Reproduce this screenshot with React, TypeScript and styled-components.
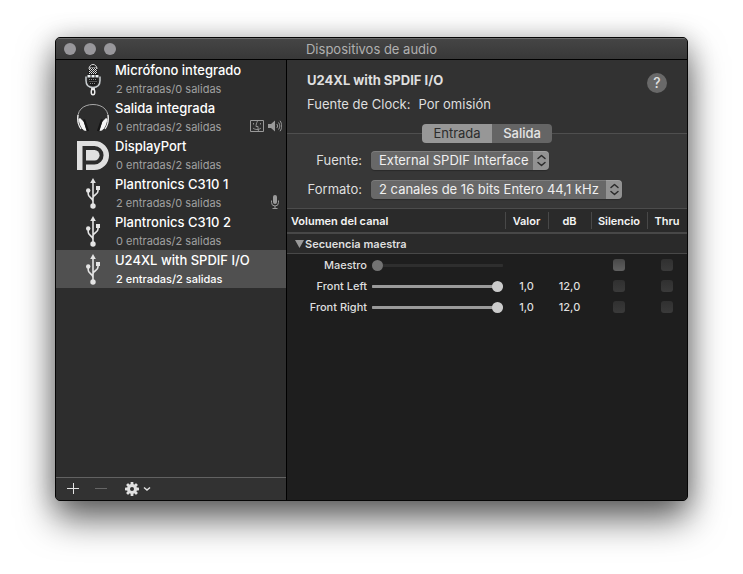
import React from "react";
import styled, { createGlobalStyle, css } from "styled-components";

const GlobalStyle = createGlobalStyle`
  * { box-sizing: border-box; }
  body {
    margin: 0;
    background: #fff;
    font-family: Inter, "Liberation Sans", sans-serif;
    font-size: 13px;
    color: #dfdfdf;
  }
  button, select, input { font: inherit; color: inherit; margin: 0; padding: 0; border: 0; }
`;

const Desktop = styled.div`
  min-height: 100vh;
  padding: 37px 55px 73px;
  display: flex;
  overflow: hidden;
`;

const Window = styled.main`
  flex: 1;
  display: flex;
  flex-direction: column;
  min-width: 0;
  border: 1px solid #050505;
  border-radius: 5px;
  overflow: hidden;
  background: #323232;
  box-shadow: 0 18px 36px rgba(0, 0, 0, 0.6), 0 2px 26px rgba(0, 0, 0, 0.22);
`;

const TitleBar = styled.header`
  height: 22px;
  display: grid;
  grid-template-columns: 1fr auto 1fr;
  align-items: center;
  padding: 0 8px;
  background: linear-gradient(#454545, #383838);
  border-top: 1px solid #6c6c6c;
  border-bottom: 1px solid #000;
`;

const Lights = styled.div`
  display: flex;
  gap: 8px;
`;

const Light = styled.button`
  width: 12px;
  height: 12px;
  border-radius: 50%;
  background: #98979b;
`;

const WindowTitle = styled.h1`
  margin: 0;
  font-size: 13px;
  line-height: 20px;
  font-weight: 400;
  color: #b0b0b0;
`;

const Body = styled.div`
  flex: 1;
  display: grid;
  grid-template-columns: 231px minmax(0, 1fr);
`;

const Sidebar = styled.aside`
  display: flex;
  flex-direction: column;
  background: #2d2d2d;
  border-right: 1px solid #000;
`;

const DeviceList = styled.ul`
  flex: 1;
  list-style: none;
  margin: 0;
  padding: 0;
`;

const DeviceRow = styled.button<{ $selected?: boolean }>`
  width: 100%;
  height: 38px;
  display: grid;
  grid-template-columns: 32px minmax(0, 1fr) auto;
  column-gap: 6px;
  padding: 0 4px 0 21px;
  text-align: left;
  color: ${(p) => (p.$selected ? "#fff" : "#a0a0a0")};
  background: ${(p) => (p.$selected ? "#505050" : "transparent")};
`;

const DeviceIcon = styled.span`
  align-self: center;
  display: flex;
  justify-content: center;
`;

const DeviceText = styled.span`
  display: flex;
  flex-direction: column;
  padding-top: 1px;
  white-space: nowrap;
`;

const DeviceName = styled.span`
  font-size: 13px;
  line-height: 18px;
  font-weight: 500;
  color: #fff;
`;

const DeviceInfo = styled.span<{ $selected?: boolean }>`
  font-size: 11px;
  line-height: 20px;
  padding-left: 1px;
  font-weight: ${(p) => (p.$selected ? 500 : 400)};
`;

const Badges = styled.span<{ $inset?: boolean }>`
  align-self: end;
  display: flex;
  align-items: center;
  gap: 4px;
  height: 22px;
  padding-right: ${(p) => (p.$inset ? 3 : 0)}px;
  color: #9a9a9a;
`;

const Footer = styled.footer`
  height: 23px;
  display: flex;
  align-items: center;
  padding-left: 9px;
  border-top: 1px solid #626262;
  background: #323232;
`;

const FootButton = styled.button<{ $wide?: boolean }>`
  height: 20px;
  width: ${(p) => (p.$wide ? 32 : 28)}px;
  display: flex;
  align-items: center;
  justify-content: ${(p) => (p.$wide ? "flex-end" : "flex-start")};
  gap: 4px;
  padding: 0 2px;
  background: none;
`;

const Detail = styled.section`
  display: flex;
  flex-direction: column;
  background: #1e1e1e;
`;

const Head = styled.div`
  height: 64px;
  display: flex;
  justify-content: space-between;
  padding: 9px 20px 0;
  background: #323232;
`;

const HeadText = styled.div`
  line-height: 22px;
`;

const DeviceTitle = styled.h2`
  margin: 0 0 2px;
  font-size: 13px;
  line-height: 22px;
  font-weight: 700;
`;

const Clock = styled.dl`
  display: flex;
  gap: 8px;
  margin: 0;
  dd { margin: 0; }
`;

const Help = styled.button`
  width: 20px;
  height: 20px;
  margin-top: 4px;
  border-radius: 50%;
  background: #696969;
  font-size: 14px;
  line-height: 20px;
  font-weight: 500;
`;

const TabRow = styled.div`
  display: flex;
  align-items: center;
  background: linear-gradient(#323232 50%, #373737 50%);
`;

const Rule = styled.span`
  flex: 1;
  height: 1px;
  background: #4f4f4f;
`;

const Tabs = styled.div`
  display: flex;
  border-radius: 4px;
  overflow: hidden;
`;

const Tab = styled.button<{ $active?: boolean }>`
  height: 19px;
  line-height: 19px;
  width: ${(p) => (p.$active ? 70 : 60)}px;
  ${(p) =>
    p.$active
      ? css`background: #979797; color: #2c2c2c;`
      : css`background: #656565; color: #e6e6e6; font-weight: 500;`}
`;

const Form = styled.div`
  display: grid;
  grid-template-columns: 55px auto;
  justify-content: start;
  column-gap: 9px;
  row-gap: 10px;
  padding: 8px 20px 9px;
  background: #373737;
  border-bottom: 1px solid #4c4c4c;
`;

const FormLabel = styled.label`
  text-align: right;
  line-height: 19px;
  white-space: nowrap;
`;

const SelectBox = styled.span<{ $wide?: boolean }>`
  display: flex;
  justify-self: start;
  width: ${(p) => (p.$wide ? 251 : 178)}px;
  height: 19px;
  border-radius: 4px;
  overflow: hidden;
  background: linear-gradient(90deg, #686868 0 calc(100% - 16px), #929292 calc(100% - 16px));
  box-shadow: inset 0 1px 0 rgba(255, 255, 255, 0.14), 0 1px 1px rgba(0, 0, 0, 0.25);
`;

const Select = styled.select`
  appearance: none;
  flex: 1;
  min-width: 0;
  padding-left: 8px;
  height: 19px;
  line-height: 19px;
  background: none;
  color: #f0f0f0;
`;

const Stepper = styled.svg`
  width: 16px;
  height: 19px;
  flex: none;
  pointer-events: none;
`;

const Table = styled.table`
  width: 100%;
  border-collapse: separate;
  border-spacing: 0;
  table-layout: fixed;
  font-size: 11px;
`;

const Col = styled.col<{ $w?: number }>`
  width: ${(p) => (p.$w ? `${p.$w}px` : "auto")};
`;

const HeadRow = styled.tr`
  height: 25px;
  background: #2a2a2a;
`;

const HeadCell = styled.th<{ $first?: boolean }>`
  padding: 0;
  font-weight: 600;
  color: #f4f4f4;
  border-bottom: 2px solid #484848;
  text-align: ${(p) => (p.$first ? "left" : "center")};
  padding-left: ${(p) => (p.$first ? 4 : 0)}px;
  background: ${(p) =>
    p.$first ? "none" : "linear-gradient(#484848, #484848) left center / 1px 17px no-repeat"};
`;

const GroupRow = styled.tr`
  height: 20px;
  background: #2a2a2a;
`;

const GroupCell = styled.th`
  padding: 0 0 0 8px;
  text-align: left;
  border-bottom: 1px solid #484848;
`;

const Disclosure = styled.button`
  display: flex;
  align-items: center;
  gap: 1px;
  background: none;
  font-weight: 600;
`;

const Row = styled.tr`
  height: 21px;
`;

const Cell = styled.td`
  padding: 1px 0 0;
  text-align: center;
  font-weight: 500;
`;

const Channel = styled.label`
  display: grid;
  grid-template-columns: 80px minmax(0, 1fr);
  align-items: center;
  column-gap: 5px;
  padding-right: 2px;
  text-align: right;
  font-weight: 500;
`;

const Slider = styled.input<{ $off?: boolean }>`
  appearance: none;
  width: 100%;
  height: 11px;
  background: linear-gradient(${(p) => (p.$off ? "#2e2e2e, #2e2e2e" : "#9a9a9a, #9a9a9a")}) center / 100% 3px no-repeat;
  border-radius: 6px;
  &::-webkit-slider-thumb {
    appearance: none;
    width: 11px;
    height: 11px;
    border-radius: 50%;
    background: ${(p) => (p.$off ? "#737373" : "#cbcbcb")};
  }
`;

const Check = styled.input<{ $on?: boolean }>`
  appearance: none;
  display: block;
  width: 12px;
  height: 12px;
  margin: 0 auto;
  border-radius: 3px;
  background: ${(p) => (p.$on ? "linear-gradient(#484848, #606060)" : "linear-gradient(#303030, #3a3a3a)")};
`;

const MicrophoneArt = () => (
  <svg width="18" height="33" viewBox="0 0 18 33">
    <path d="M4.500 6.500a4.500 5 0 0 1 9 0v6h-9zM4.500 14h9v4.500a4.500 4.500 0 0 1-9 0z" fill="#1a1a1a" />
    <path d="M5 6a4 4.500 0 0 1 8 0" fill="none" stroke="#ddd" strokeWidth="1" />
    <path d="M5.500 4.500h7M5 6.500h8M5 8.500h8M5 10.500h8" stroke="#e4e4e4" strokeDasharray="1 1" />
    <path d="M6 5.500h7M6 7.500h7M6 9.500h7" stroke="#c4c4c4" strokeDasharray="1 1" />
    <path d="M5 16.500h8M5.500 18.500h7M6 20.500h6" stroke="#8c8c8c" strokeDasharray="1 1" />
    <path d="M2 13.500v4c0 4.800 3 7 7 7s7-2.200 7-7v-4" fill="none" stroke="#c9ced1" strokeWidth="1.500" />
    <path d="M3.500 12h11v2.500h-11z" fill="#e9eef0" />
    <path d="M6.500 11h1v5h-1zM10.500 11h1v5h-1z" fill="#2a2a2a" />
    <path d="M7 25h4v2H7z" fill="#ddd" />
    <ellipse cx="9" cy="29" rx="1.800" ry="2.800" fill="none" stroke="#eee" strokeWidth="1.400" />
  </svg>
);

const HeadphonesArt = () => (
  <svg width="32" height="30" viewBox="0 0 32 30">
    <path d="M1.500 19C-1.500 8 6 1.500 16 1.500S33.500 8 30.500 19" fill="none" stroke="#a8a8a8" strokeWidth="1" />
    <path d="M1 12c-1 6 0 10 3 14M31 12c1 6 0 10-3 14" fill="none" stroke="#eee" strokeWidth="1.200" />
    <path d="M1.500 16c1 5 2 8.500 5.500 11.500l2.500.5-2.500-9-4-4z" fill="#f5f5f5" />
    <path d="M30.500 16c-1 5-2 8.500-5.500 11.500l-2.500.5 2.500-9 4-4z" fill="#f5f5f5" />
    <path d="M7 16.500l4 11.500M25 16.500l-4 11.500" stroke="#151515" strokeWidth="2.200" />
  </svg>
);

const DisplayPortArt = () => (
  <svg width="32" height="30" viewBox="0 0 32 30" fill="#e0e0e0">
    <path d="M0 0h17.500a14.500 14.500 0 0 1 0 29H9v-5.500h8.500a9 9.200 0 0 0 0-18.500H5.500v24H0z" />
    <path d="M9 9h8.500a5 5.200 0 0 1 0 10.500H9z" />
  </svg>
);

const UsbArt = () => (
  <svg width="14" height="31" viewBox="0 0 14 31" fill="#e4e4e4">
    <path d="M7 0l2.800 5H4.200z" />
    <path d="M7 4v24M7 23.500c0-4-4.800-3.500-4.800-7.500v-4M7 20c0-3.500 5-3 5-7V9" fill="none" stroke="#e4e4e4" strokeWidth="1.600" />
    <circle cx="2.200" cy="12.500" r="2.200" />
    <path d="M10 8h4v4h-4z" />
    <circle cx="7" cy="28" r="2.700" />
  </svg>
);

const FinderBadge = () => (
  <svg width="14" height="12" viewBox="0 0 14 12" fill="none" stroke="currentColor">
    <path d="M.5.500h13v11H.5z" />
    <path d="M7.500 1C6.500 3 6 5 6 6.500h2c0 2 0 3 .5 5M3.500 3v1.500M10.500 3v1.500M3 8c2 2 6 2 8 0" strokeWidth=".9" />
  </svg>
);

const SpeakerBadge = () => (
  <svg width="14" height="12" viewBox="0 0 14 12">
    <path d="M0 4h3l4-3.500v11L3 8H0z" fill="currentColor" />
    <path d="M8.800 4c1 1.200 1 2.800 0 4M10.500 2.500c1.800 2 1.800 5 0 7M12 .8c2.300 3 2.300 7.400 0 10.400" fill="none" stroke="currentColor" strokeWidth="1" />
  </svg>
);

const MicBadge = () => (
  <svg width="8" height="14" viewBox="0 0 8 14">
    <rect x="2" y="0" width="4" height="9" rx="2" fill="currentColor" />
    <path d="M.5 5.500v2a3.500 3.500 0 0 0 7 0v-2M4 11v2.500M1.500 13.500h5" fill="none" stroke="currentColor" />
  </svg>
);

const GearArt = () => (
  <svg width="14" height="14" viewBox="-7 -7 14 14" fill="#e0e0e0">
    {[0, 45, 90, 135].map((a) => (
      <rect key={a} x="-1.400" y="-7" width="2.800" height="14" rx=".6" transform={`rotate(${a})`} />
    ))}
    <circle r="5" />
    <circle r="2" fill="#323232" />
  </svg>
);

const Arrows = () => (
  <Stepper viewBox="0 0 16 19" fill="none" stroke="#2b2b2b" strokeWidth="1.500" strokeLinecap="round" strokeLinejoin="round">
    <path d="M5 7.500l3.500-3 3.500 3M5 11.500l3.500 3 3.500-3" />
  </Stepper>
);

const devices = [
  { name: "Micrófono integrado", info: "2 entradas/0 salidas", art: <MicrophoneArt /> },
  { name: "Salida integrada", info: "0 entradas/2 salidas", art: <HeadphonesArt />, badges: <><FinderBadge /><SpeakerBadge /></> },
  { name: "DisplayPort", info: "0 entradas/2 salidas", art: <DisplayPortArt /> },
  { name: "Plantronics C310 1", info: "2 entradas/0 salidas", art: <UsbArt />, badges: <MicBadge />, inset: true },
  { name: "Plantronics C310 2", info: "0 entradas/2 salidas", art: <UsbArt /> },
  { name: "U24XL with SPDIF I/O", info: "2 entradas/2 salidas", art: <UsbArt />, selected: true },
];

const channels = [
  { name: "Maestro", level: 0, value: "", db: "", off: true },
  { name: "Front Left", level: 100, value: "1,0", db: "12,0", off: false },
  { name: "Front Right", level: 100, value: "1,0", db: "12,0", off: false },
];

export default function App() {
  return (
    <Desktop>
      <GlobalStyle />
      <Window>
        <TitleBar>
          <Lights>
            <Light aria-label="Cerrar" />
            <Light aria-label="Minimizar" />
            <Light aria-label="Ampliar" />
          </Lights>
          <WindowTitle>Dispositivos de audio</WindowTitle>
        </TitleBar>
        <Body>
          <Sidebar>
            <DeviceList>
              {devices.map((d) => (
                <li key={d.name}>
                  <DeviceRow $selected={d.selected}>
                    <DeviceIcon>{d.art}</DeviceIcon>
                    <DeviceText>
                      <DeviceName>{d.name}</DeviceName>
                      <DeviceInfo $selected={d.selected}>{d.info}</DeviceInfo>
                    </DeviceText>
                    {d.badges && <Badges $inset={d.inset}>{d.badges}</Badges>}
                  </DeviceRow>
                </li>
              ))}
            </DeviceList>
            <Footer>
              <FootButton aria-label="Añadir">
                <svg width="12" height="12" viewBox="0 0 12 12"><path d="M0 5.500h12M6.500 0v11" stroke="#e4e4e4" /></svg>
              </FootButton>
              <FootButton aria-label="Eliminar" disabled>
                <svg width="12" height="12" viewBox="0 0 12 12"><path d="M0 5.500h12" stroke="#666" /></svg>
              </FootButton>
              <FootButton $wide aria-label="Acciones">
                <GearArt />
                <svg width="8" height="6" viewBox="0 0 8 6"><path d="M1 1.500l3 2.500 3-2.500" fill="none" stroke="#e0e0e0" strokeWidth="1.500" /></svg>
              </FootButton>
            </Footer>
          </Sidebar>
          <Detail>
            <Head>
              <HeadText>
                <DeviceTitle>U24XL with SPDIF I/O</DeviceTitle>
                <Clock>
                  <dt>Fuente de Clock:</dt>
                  <dd>Por omisión</dd>
                </Clock>
              </HeadText>
              <Help aria-label="Ayuda">?</Help>
            </Head>
            <TabRow>
              <Rule />
              <Tabs role="tablist">
                <Tab role="tab" aria-selected="true" $active>Entrada</Tab>
                <Tab role="tab" aria-selected="false">Salida</Tab>
              </Tabs>
              <Rule />
            </TabRow>
            <Form>
              <FormLabel htmlFor="source">Fuente:</FormLabel>
              <SelectBox>
                <Select id="source"><option>External SPDIF Interface</option></Select>
                <Arrows />
              </SelectBox>
              <FormLabel htmlFor="format">Formato:</FormLabel>
              <SelectBox $wide>
                <Select id="format"><option>2 canales de 16 bits Entero 44,1 kHz</option></Select>
                <Arrows />
              </SelectBox>
            </Form>
            <Table>
              <colgroup>
                <Col />
                <Col $w={43} />
                <Col $w={43} />
                <Col $w={56} />
                <Col $w={40} />
              </colgroup>
              <thead>
                <HeadRow>
                  <HeadCell $first>Volumen del canal</HeadCell>
                  <HeadCell>Valor</HeadCell>
                  <HeadCell>dB</HeadCell>
                  <HeadCell>Silencio</HeadCell>
                  <HeadCell>Thru</HeadCell>
                </HeadRow>
              </thead>
              <tbody>
                <GroupRow>
                  <GroupCell colSpan={5}>
                    <Disclosure aria-expanded="true">
                      <svg width="9" height="8" viewBox="0 0 9 8"><path d="M0 0h9L4.500 8z" fill="#9a9a9a" /></svg>
                      Secuencia maestra
                    </Disclosure>
                  </GroupCell>
                </GroupRow>
                {channels.map((c) => (
                  <Row key={c.name}>
                    <Cell>
                      <Channel>
                        {c.name}
                        <Slider type="range" defaultValue={c.level} disabled={c.off} $off={c.off} />
                      </Channel>
                    </Cell>
                    <Cell>{c.value}</Cell>
                    <Cell>{c.db}</Cell>
                    <Cell><Check type="checkbox" aria-label={`Silencio ${c.name}`} $on={c.off} /></Cell>
                    <Cell><Check type="checkbox" aria-label={`Thru ${c.name}`} /></Cell>
                  </Row>
                ))}
              </tbody>
            </Table>
          </Detail>
        </Body>
      </Window>
    </Desktop>
  );
}
